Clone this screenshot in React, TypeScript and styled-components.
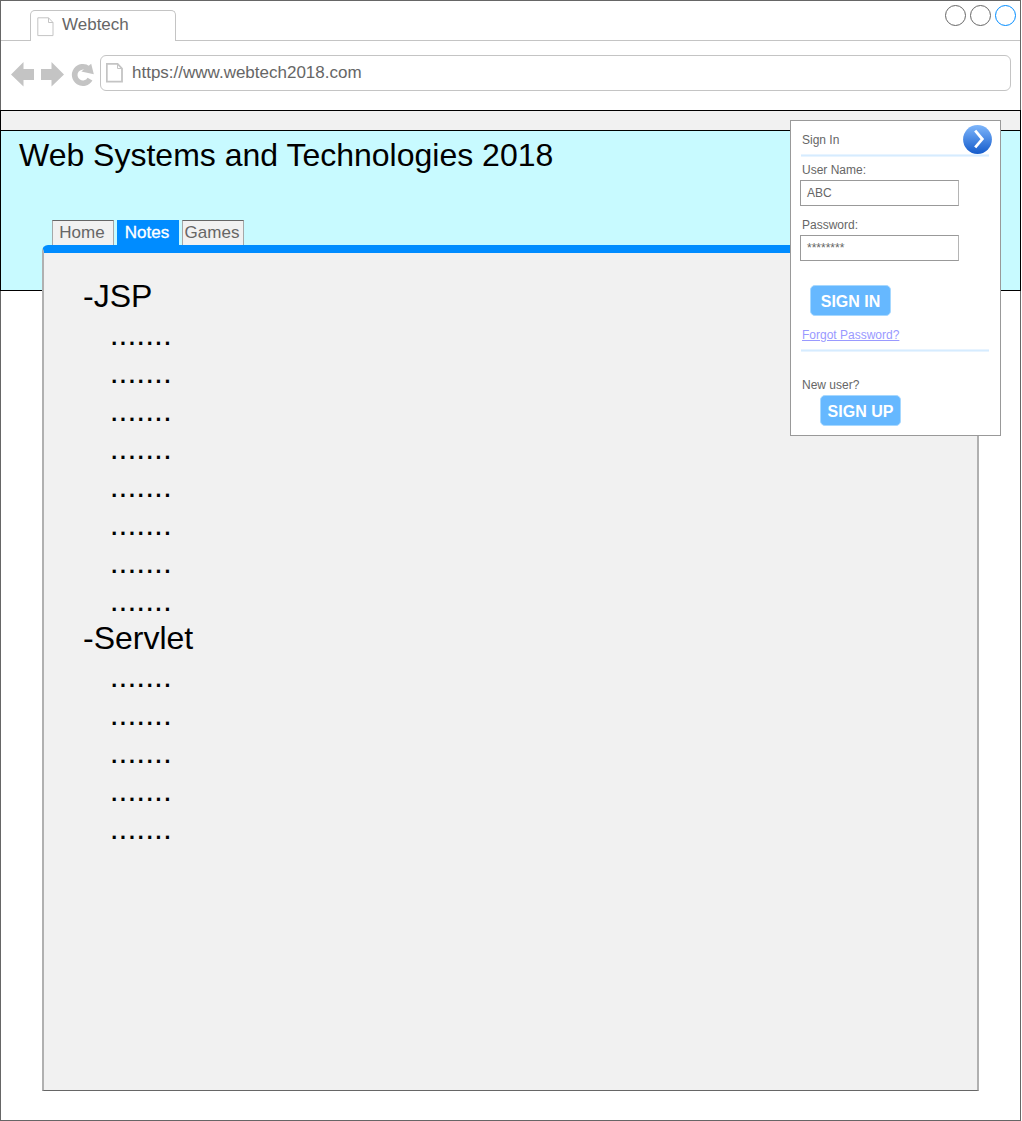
import React from "react";
import styled, { createGlobalStyle } from "styled-components";

const GlobalStyle = createGlobalStyle`
  * { box-sizing: border-box; }
  body { margin: 0; background: #fff; }
`;

const BrowserWindow = styled.div`
  position: relative;
  width: 1021px;
  height: 1121px;
  border: 1px solid #666;
  background: #fff;
  font-family: "Liberation Sans", Arial, sans-serif;
  color: #666;
  display: flex;
  flex-direction: column;
`;

const TabStrip = styled.header`
  display: flex;
  justify-content: space-between;
  height: 40px;
  padding: 0 4px 0 29px;
  flex: none;
  border-bottom: 1px solid #c4c4c4;
`;

const BrowserTab = styled.div`
  display: flex;
  gap: 8px;
  width: 146px;
  height: 31px;
  margin-top: 9px;
  padding: 6px 0 0 6px;
  border: 1px solid #c4c4c4;
  border-bottom: 0;
  border-radius: 5px 5px 0 0;
  background: #fff;
`;

const TabTitle = styled.span`
  font-size: 17px;
  line-height: 20px;
  margin-top: -2px;
`;

const WindowControls = styled.div`
  display: flex;
  gap: 4px;
  padding-top: 4px;
`;

const WindowButton = styled.span<{ $color: string }>`
  width: 21px;
  height: 21px;
  border: 1px solid ${(p) => p.$color};
  border-radius: 50%;
`;

const Toolbar = styled.div`
  display: flex;
  height: 69px;
  flex: none;
  padding: 14px 9px 0 10px;
`;

const NavIcons = styled.svg`
  flex: none;
  width: 89px;
  height: 36px;
`;

const AddressBar = styled.div`
  display: flex;
  flex: 1;
  gap: 9px;
  height: 36px;
  padding: 7px 0 0 5px;
  border: 1px solid #c4c4c4;
  border-radius: 6px;
`;

const Url = styled.span`
  font-size: 17px;
  line-height: 20px;
`;

const GreyStrip = styled.div`
  flex: none;
  height: 20px;
  margin: 0 -1px;
  border: 1px solid #000;
  border-bottom: 0;
  background: #f1f1f1;
`;

const Banner = styled.div`
  flex: none;
  height: 161px;
  margin: 0 -1px;
  padding: 5px 18px;
  border: 1px solid #000;
  background: #c8faff;
`;

const SiteTitle = styled.h1`
  margin: 0;
  font-size: 32px;
  line-height: 38px;
  font-weight: 400;
  color: #000;
`;

const Site = styled.main`
  display: flex;
  flex-direction: column;
  flex: 1;
  margin: -71px 41px 29px;
`;

const SiteTabs = styled.nav`
  display: flex;
  gap: 3px;
  flex: none;
  height: 25px;
  padding-left: 10px;
`;

const SiteTab = styled.div<{ $active?: boolean }>`
  width: 62px;
  padding-right: 2px;
  text-align: center;
  font-size: 17px;
  line-height: 24px;
  white-space: nowrap;
  border-style: solid;
  border-width: 1px 1px 0 1px;
  border-color: ${(p) => (p.$active ? "#008cff" : "#666 #a5a8a8")};
  background: ${(p) => (p.$active ? "#008cff" : "#f1f1f1")};
  color: ${(p) => (p.$active ? "#fff" : "#666")};
  -webkit-text-stroke: ${(p) => (p.$active ? "0.35px #fff" : "0")};
`;

const Panel = styled.section`
  flex: 1;
  border: 2px solid #b0b0b0;
  border-top: 8px solid #008cff;
  border-bottom: 1px solid #666;
  border-radius: 6px 6px 0 0;
  background: #f1f1f1;
  padding: 24px 39px;
  color: #000;
  font-size: 32px;
  line-height: 38px;
`;

const Topic = styled.div``;

const Note = styled.div`
  padding-left: 26.67px;
`;

const LoginCard = styled.aside`
  position: absolute;
  left: 789px;
  top: 119px;
  width: 211px;
  height: 316px;
  padding: 4px 8px 0 9px;
  display: flex;
  flex-direction: column;
  border: 1px solid #999;
  background: #fff;
  font-size: 12px;
`;

const CardHeader = styled.div`
  display: flex;
  justify-content: space-between;
  height: 29px;
  line-height: 30px;
  padding-left: 2px;
`;

const Divider = styled.div`
  width: 188px;
  height: 3px;
  margin-left: 1px;
  border: solid #e8f4ff;
  border-width: 1px 0;
  background: #d6ecff;
  flex: none;
`;

const Label = styled.label<{ $top: number }>`
  margin-top: ${(p) => p.$top}px;
  padding-left: 2px;
  line-height: 14px;
`;

const Field = styled.div`
  width: 159px;
  height: 26px;
  margin: 3px 0 0 0;
  padding-left: 6px;
  border: 1px solid #999;
  border-right-color: #b5b5b5;
  line-height: 24px;
  flex: none;
`;

const ActionButton = styled.button<{ $left: number; $top: number }>`
  width: 81px;
  height: 31px;
  margin: ${(p) => p.$top}px 0 0 ${(p) => p.$left}px;
  padding: 2px 0 0;
  flex: none;
  border: 1px solid #a6d8ff;
  border-radius: 5px;
  background: #66b8ff;
  color: #fff;
  font: bold 16px "Liberation Sans", Arial, sans-serif;
`;

const ForgotLink = styled.a`
  margin: 12px 0 7px 2px;
  line-height: 14px;
  color: #9999ff;
  text-decoration: underline;
`;

function PageIcon({ stroke }: { stroke: number }) {
  return (
    <svg width="17" height="20" viewBox="0 0 17 20" fill="none" stroke="#c4c4c4" strokeWidth={stroke}>
      <path d="M.8 .8H11.5L16 5.5V18.6H.8Z" />
      <path d="M11.5 .8V5.5H16" strokeWidth="1" />
    </svg>
  );
}

function ArrowBadge() {
  return (
    <svg width="29" height="29" viewBox="0 0 29 29">
      <defs>
        <linearGradient id="badge" x1="0" y1="0" x2="0" y2="1">
          <stop offset="0" stopColor="#7eb6fb" />
          <stop offset="1" stopColor="#145bcb" />
        </linearGradient>
      </defs>
      <circle cx="14.5" cy="14.5" r="14.4" fill="url(#badge)" />
      <path d="M12.2 5.6L19.3 14.1L12.2 22.4" fill="none" stroke="#fff" strokeWidth="2.8" />
    </svg>
  );
}

const topics = [
  { title: "-JSP", notes: 8 },
  { title: "-Servlet", notes: 5 },
];

export default function App() {
  return (
    <>
      <GlobalStyle />
      <BrowserWindow>
        <TabStrip>
          <BrowserTab>
            <PageIcon stroke={1} />
            <TabTitle>Webtech</TabTitle>
          </BrowserTab>
          <WindowControls>
            <WindowButton $color="#666" />
            <WindowButton $color="#666" />
            <WindowButton $color="#008cff" />
          </WindowControls>
        </TabStrip>
        <Toolbar>
          <NavIcons viewBox="0 0 89 36" fill="#c4c4c4">
            <path d="M0 19.5L12.5 7V14H23V25H12.5V31.5Z" />
            <path d="M53 19.5L40.5 7V14H30V25H40.5V31.5Z" />
            <path
              d="M79 24.1A8.2 8.2 0 1 1 77 13.6"
              fill="none"
              stroke="#c4c4c4"
              strokeWidth="5.6"
            />
            <path d="M80.2 8.8L82.8 19.2L70.3 16.4Z" />
          </NavIcons>
          <AddressBar>
            <PageIcon stroke={1.8} />
            <Url>https://www.webtech2018.com</Url>
          </AddressBar>
        </Toolbar>
        <GreyStrip />
        <Banner>
          <SiteTitle>Web Systems and Technologies 2018</SiteTitle>
        </Banner>
        <Site>
          <SiteTabs>
            <SiteTab>Home</SiteTab>
            <SiteTab $active>Notes</SiteTab>
            <SiteTab>Games</SiteTab>
          </SiteTabs>
          <Panel>
            {topics.map((t) => (
              <Topic key={t.title}>
                {t.title}
                {Array.from({ length: t.notes }, (_, i) => (
                  <Note key={i}>.......</Note>
                ))}
              </Topic>
            ))}
          </Panel>
        </Site>
        <LoginCard>
          <CardHeader>
            <span>Sign In</span>
            <ArrowBadge />
          </CardHeader>
          <Divider />
          <Label $top={6}>User Name:</Label>
          <Field>ABC</Field>
          <Label $top={12}>Password:</Label>
          <Field>********</Field>
          <ActionButton $left={10} $top={24}>SIGN IN</ActionButton>
          <ForgotLink>Forgot Password?</ForgotLink>
          <Divider />
          <Label $top={26}>New user?</Label>
          <ActionButton $left={20} $top={3}>SIGN UP</ActionButton>
        </LoginCard>
      </BrowserWindow>
    </>
  );
}
